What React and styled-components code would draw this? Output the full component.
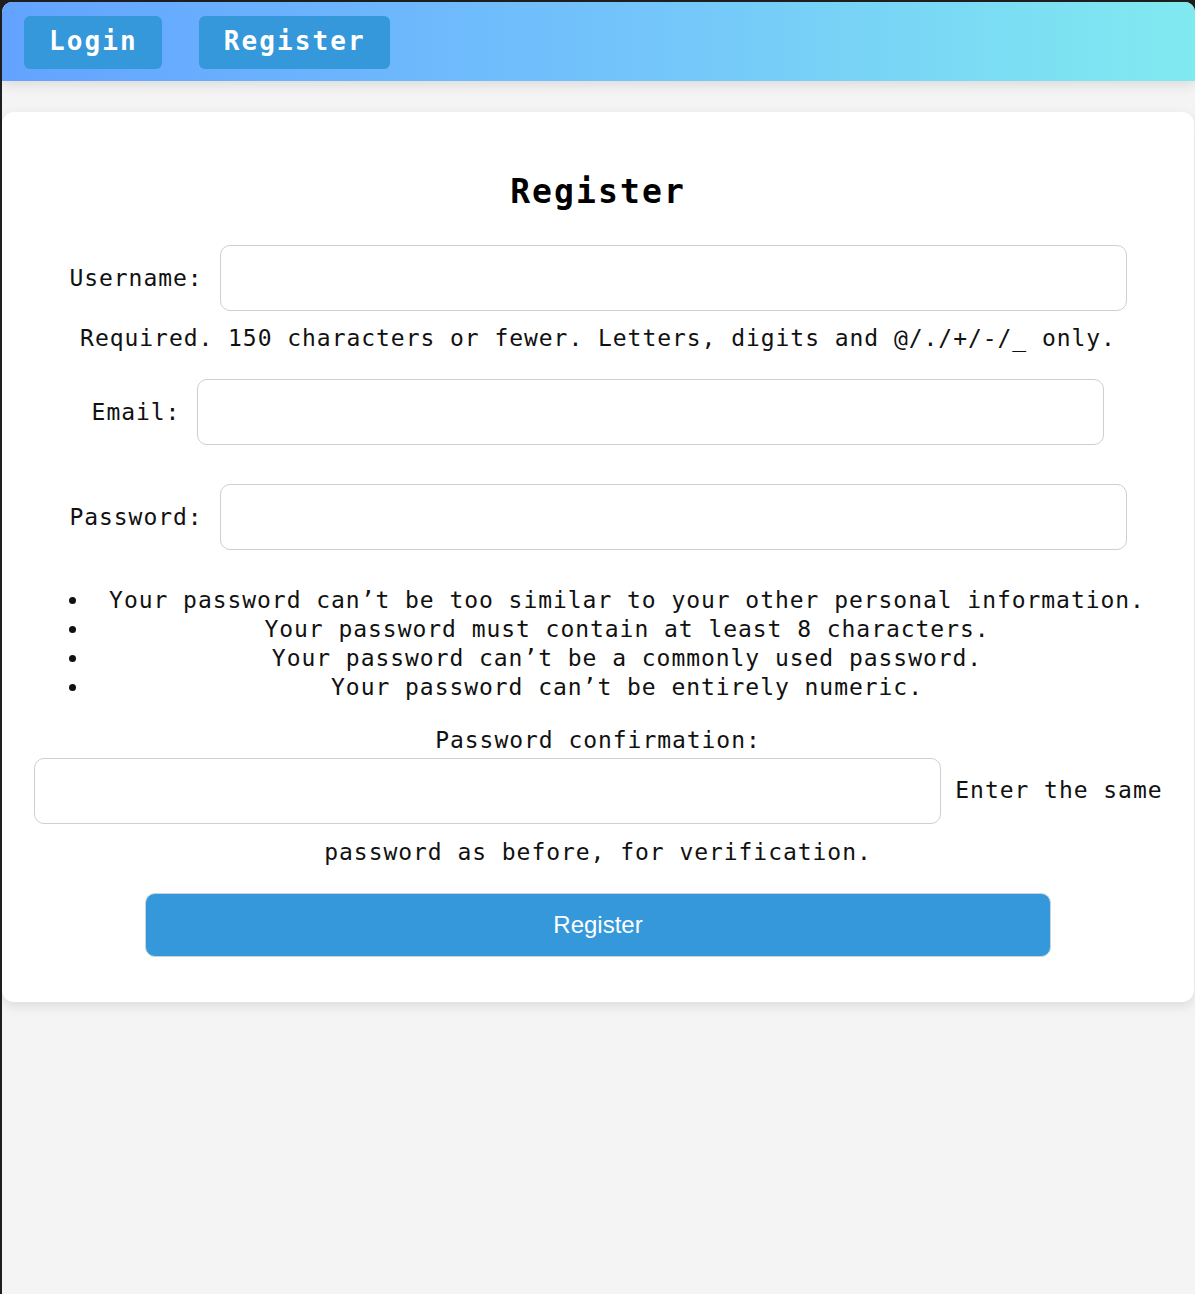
import styled, { createGlobalStyle } from "styled-components";

const GlobalStyle = createGlobalStyle`
    html, body {
        margin: 0;
        padding: 0;
        background-color: #1e1e1e;
    }

    * {
        box-sizing: border-box;
    }
`;

const rules = [
    "Your password can’t be too similar to your other personal information.",
    "Your password must contain at least 8 characters.",
    "Your password can’t be a commonly used password.",
    "Your password can’t be entirely numeric."
];

export default function App() {
    return (
        <>
            <GlobalStyle />
            <Window>
                <Nav>
                    <NavButton href="#">Login</NavButton>
                    <NavButton href="#">Register</NavButton>
                </Nav>

                <Main>
                    <Card>
                        <Title>Register</Title>

                        <Row style={{ marginTop: 33 }}>
                            <Label htmlFor="username">Username:</Label>
                            <Input id="username" type="text" />
                        </Row>
                        <Help>Required. 150 characters or fewer. Letters, digits and @/./+/-/_ only.</Help>

                        <Row style={{ marginTop: 26 }}>
                            <Label htmlFor="email">Email:</Label>
                            <Input id="email" type="email" />
                        </Row>

                        <Row style={{ marginTop: 39 }}>
                            <Label htmlFor="password">Password:</Label>
                            <Input id="password" type="password" />
                        </Row>

                        <Rules>
                            {rules.map((rule) => <Rule key={rule}>{rule}</Rule>)}
                        </Rules>

                        <ConfirmLabel htmlFor="password2">Password confirmation:</ConfirmLabel>
                        <ConfirmLine>
                            <InlineInput id="password2" type="password" /> Enter the same password as before, for verification.
                        </ConfirmLine>

                        <Submit type="button">Register</Submit>
                    </Card>
                </Main>
            </Window>
        </>
    );
}

const Window = styled.div`
    margin: 2px 0 0 2px;
    min-height: 1292px;

    border-radius: 10px 10px 0 0;
    overflow: hidden;

    background-color: #f4f4f4;

    font-family: "DejaVu Sans Mono", "Liberation Mono", monospace;
    color: #111;
`;

const Nav = styled.nav`
    height: 79px;

    display: flex;
    flex-direction: row;
    align-items: center;
    gap: 37px;

    padding: 0 22px;

    background: linear-gradient(90deg, #63a3ff 0%, #72c2fb 50%, #80eaf0 100%);
    box-shadow: 0 4px 12px rgba(0, 0, 0, 0.1);

    position: relative;
    z-index: 1;
`;

const NavButton = styled.a`
    height: 53px;

    display: flex;
    align-items: center;

    padding: 0 24px 3px 25px;
    margin-top: 2px;

    border-radius: 6px;
    background-color: #3498db;

    color: white;
    font-size: 26px;
    font-weight: 700;
    letter-spacing: 2.1px;
    text-decoration: none;
`;

const Main = styled.main`
    padding-top: 31px;
`;

const Card = styled.div`
    width: 1192px;

    display: flex;
    flex-direction: column;
    align-items: stretch;

    padding: 30px 30px 45px;

    border-radius: 12px;
    background-color: white;
    box-shadow: 0 4px 12px rgba(0, 0, 0, 0.1);

    font-size: 23px;
    letter-spacing: 0.95px;
    line-height: 29px;
`;

const Title = styled.h2`
    margin: 30px 0 0;

    text-align: center;
    font-size: 33px;
    font-weight: 700;
    letter-spacing: 2.1px;
    line-height: 40px;
    color: #000;
`;

const Row = styled.div`
    display: flex;
    flex-direction: row;
    justify-content: center;
    align-items: center;
    gap: 17px;
`;

const Label = styled.label`
    white-space: nowrap;
`;

const Input = styled.input`
    width: 907px;
    height: 66px;

    padding: 0 14px;

    border: 1px solid #cfcfcf;
    border-radius: 10px;
    outline: none;

    font-family: inherit;
    font-size: 18px;
`;

const Help = styled.div`
    margin-top: 13px;
    text-align: center;
`;

const Rules = styled.ul`
    margin: 36px 0 0;
    padding: 0 0 0 58px;

    list-style: disc outside;
`;

const Rule = styled.li`
    text-align: center;
`;

const ConfirmLabel = styled.label`
    display: block;
    margin-top: 24px;
    text-align: center;
`;

const ConfirmLine = styled.div`
    text-align: center;
    line-height: 50px;
`;

const InlineInput = styled(Input)`
    display: inline-block;
    vertical-align: middle;
    margin: 3px 0;
`;

const Submit = styled.button`
    width: 906px;
    height: 64px;

    align-self: center;
    margin-top: 16px;

    border: 1px solid #c9d3da;
    border-radius: 10px;
    background-color: #3498db;

    color: white;
    font-family: "Liberation Sans", Arial, sans-serif;
    font-size: 24px;
    letter-spacing: 0;

    cursor: pointer;
`;
